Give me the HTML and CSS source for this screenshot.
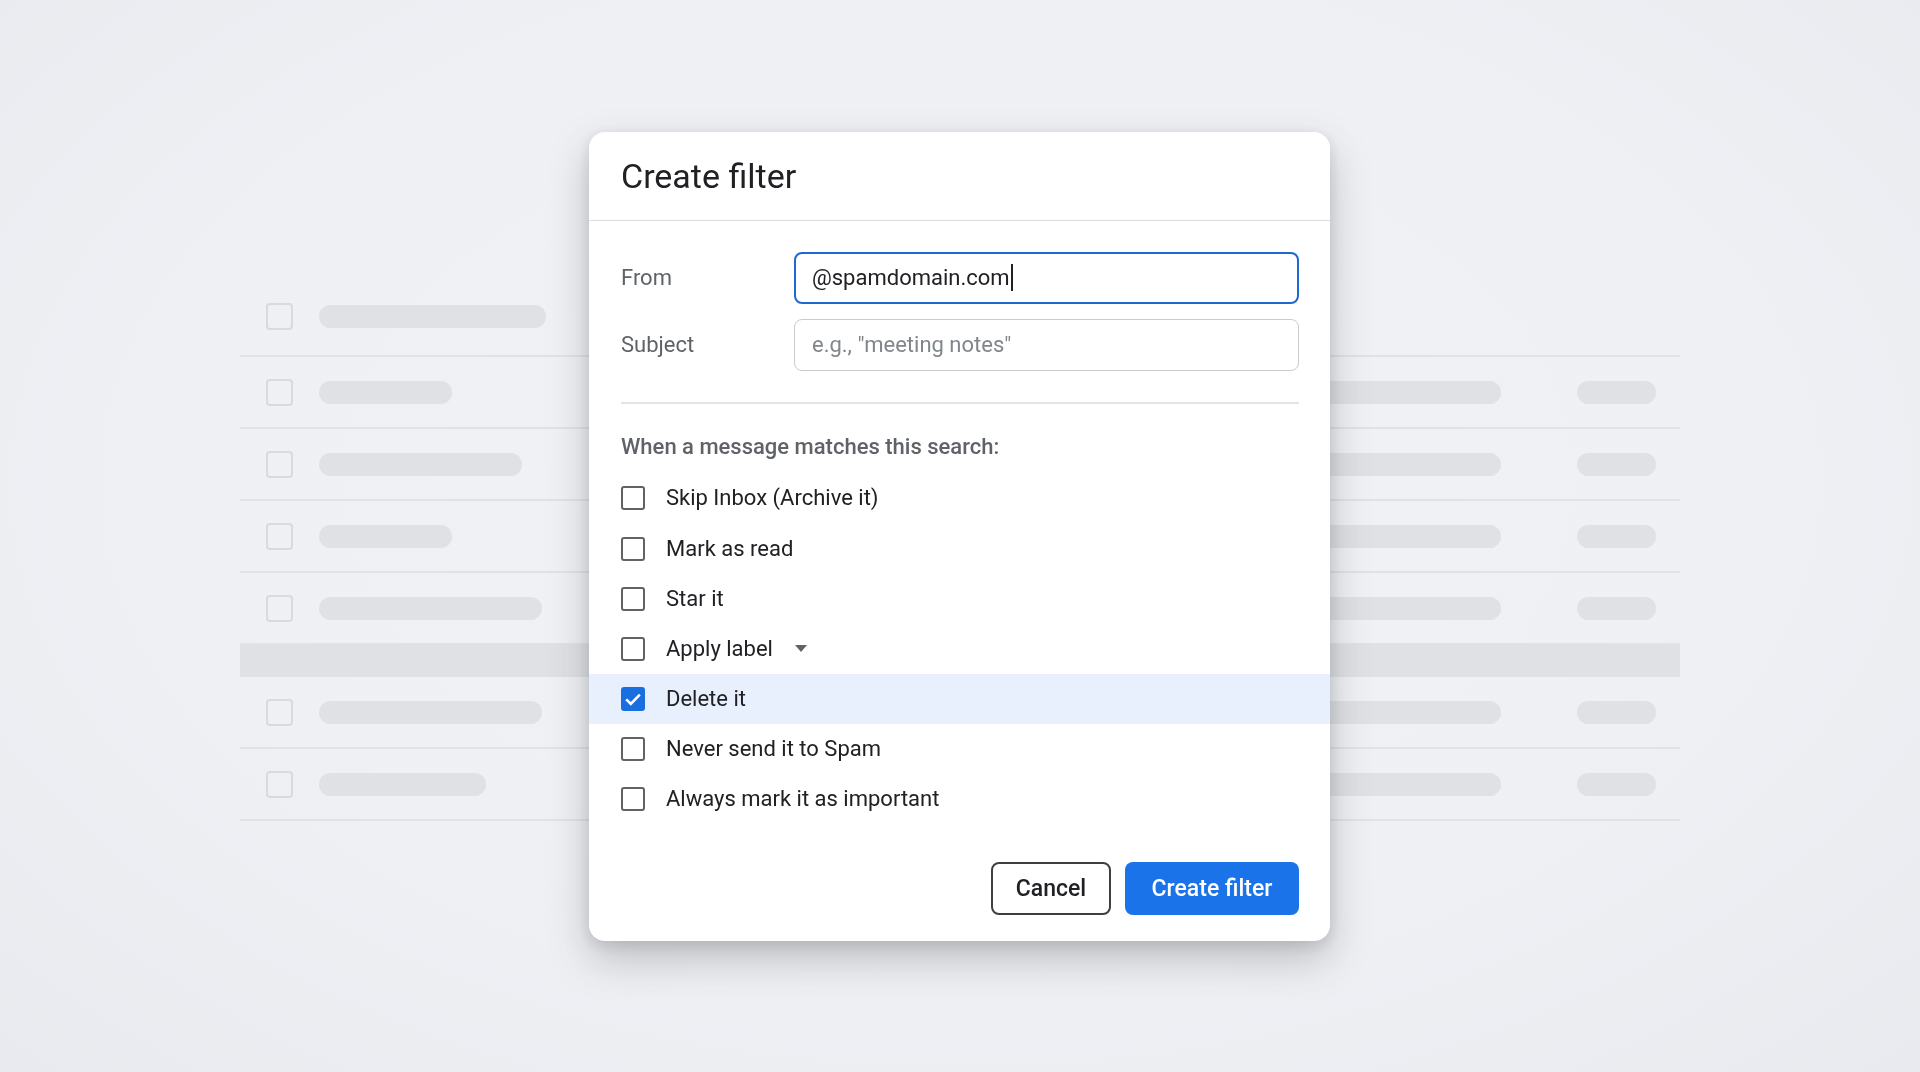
FILE: index.html
```html
<!DOCTYPE html>
<html lang="en">
    <head>
        <meta charset="UTF-8" />
        <meta name="viewport" content="width=device-width, initial-scale=1.0" />
        <title>Create filter</title>
        <link rel="stylesheet" href="styles.css">
    </head>
    <body>
        <div class="inbox">
            <div class="mail-row first">
                <span class="mail-check"></span>
                <span class="mail-bar" style="width: 227px"></span>
            </div>
            <div class="mail-row">
                <span class="mail-check"></span>
                <span class="mail-bar" style="width: 133px"></span>
                <span class="mail-bar subject"></span>
                <span class="mail-bar date"></span>
            </div>
            <div class="mail-row">
                <span class="mail-check"></span>
                <span class="mail-bar" style="width: 203px"></span>
                <span class="mail-bar subject"></span>
                <span class="mail-bar date"></span>
            </div>
            <div class="mail-row">
                <span class="mail-check"></span>
                <span class="mail-bar" style="width: 133px"></span>
                <span class="mail-bar subject"></span>
                <span class="mail-bar date"></span>
            </div>
            <div class="mail-row">
                <span class="mail-check"></span>
                <span class="mail-bar" style="width: 223px"></span>
                <span class="mail-bar subject"></span>
                <span class="mail-bar date"></span>
            </div>
            <div class="mail-band"></div>
            <div class="mail-row">
                <span class="mail-check"></span>
                <span class="mail-bar" style="width: 223px"></span>
                <span class="mail-bar subject"></span>
                <span class="mail-bar date"></span>
            </div>
            <div class="mail-row">
                <span class="mail-check"></span>
                <span class="mail-bar" style="width: 167px"></span>
                <span class="mail-bar subject"></span>
                <span class="mail-bar date"></span>
            </div>
        </div>

        <div class="scrim">
            <div class="dialog">
                <h1 class="dialog-title">Create filter</h1>
                <div class="dialog-body">
                    <div class="fields">
                        <label class="field-label">From</label>
                        <div class="field focused">
                            <span>@spamdomain.com</span><span class="caret"></span>
                        </div>
                        <label class="field-label">Subject</label>
                        <div class="field">
                            <span class="placeholder">e.g., "meeting notes"</span>
                        </div>
                    </div>
                    <div class="divider"></div>
                    <p class="actions-title">When a message matches this search:</p>
                </div>
                <ul class="actions">
                    <li class="action"><span class="checkbox"></span>Skip Inbox (Archive it)</li>
                    <li class="action"><span class="checkbox"></span>Mark as read</li>
                    <li class="action"><span class="checkbox"></span>Star it</li>
                    <li class="action">
                        <span class="checkbox"></span>Apply label
                        <svg class="dropdown" width="14" height="8" viewBox="0 0 14 8"><path d="M1 0h12L7 7z" fill="#5f6368"/></svg>
                    </li>
                    <li class="action selected">
                        <span class="checkbox checked">
                            <svg width="20" height="20" viewBox="0 0 20 20"><path d="M3.2 10.4l4.6 4.4 9-9.2" fill="none" stroke="#fff" stroke-width="2.6"/></svg>
                        </span>Delete it
                    </li>
                    <li class="action"><span class="checkbox"></span>Never send it to Spam</li>
                    <li class="action"><span class="checkbox"></span>Always mark it as important</li>
                </ul>
                <div class="dialog-footer">
                    <button class="btn outline">Cancel</button>
                    <button class="btn primary">Create filter</button>
                </div>
            </div>
        </div>
    </body>
</html>
```

FILE: styles.css
```css
* {
    margin: 0;
    padding: 0;
    box-sizing: border-box;
}

body {
    width: 1920px;
    height: 1072px;
    overflow: hidden;
    background: radial-gradient(ellipse at 50% 45%, #f1f2f6 0%, #eef0f4 60%, #e8eaef 100%);
    font-family: Roboto, "Liberation Sans", sans-serif;
    color: #202124;
}

/* inbox skeleton behind the dialog */
.inbox {
    width: 1440px;
    margin: 285px auto 0;
}

.mail-row {
    display: flex;
    align-items: center;
    height: 72px;
    padding: 0 24px 0 26px;
    border-bottom: 2px solid #e0e2e6;

    &.first {
        padding-bottom: 8px;
    }
}

.mail-band {
    height: 32px;
    background: #dfe1e5;
}

.mail-check {
    flex: none;
    width: 27px;
    height: 27px;
    border: 2px solid #d8dadf;
    border-radius: 4px;
}

.mail-bar {
    flex: none;
    height: 23px;
    margin-left: 26px;
    border-radius: 12px;
    background: #dfe1e5;

    &.subject {
        width: 350px;
        margin-left: auto;
    }
    &.date {
        width: 79px;
        margin-left: 76px;
    }
}

/* dialog */
.scrim {
    position: fixed;
    inset: 0;
    display: flex;
    align-items: center;
    justify-content: center;
}

.dialog {
    width: 741px;
    margin-right: 1px;
    background: #fff;
    border-radius: 16px;
    overflow: hidden;
    box-shadow: 0 18px 40px rgba(60, 64, 67, 0.28), 0 4px 14px rgba(60, 64, 67, 0.14);
}

.dialog-title {
    height: 89px;
    padding: 0 32px;
    line-height: 88px;
    font-size: 34px;
    font-weight: 400;
    color: #202124;
    border-bottom: 1px solid #dadce0;
}

.dialog-body {
    padding: 31px 31px 0 32px;
}

.fields {
    display: grid;
    grid-template-columns: 173px 1fr;
    row-gap: 15px;
    align-items: center;
}

.field-label {
    font-size: 22px;
    color: #5f6368;
}

.field {
    display: flex;
    align-items: center;
    height: 52px;
    padding: 0 17px;
    border: 1px solid #c9cbcf;
    border-radius: 8px;
    font-size: 22px;

    &.focused {
        padding: 0 16px;
        border: 2px solid #1f68d4;
    }
    .placeholder {
        color: #80868b;
    }
    .caret {
        width: 2px;
        height: 27px;
        margin-left: 1px;
        background: #202124;
    }
}

.divider {
    height: 2px;
    margin-top: 31px;
    background: #e2e4e7;
}

.actions-title {
    margin: 29px 0 12px;
    line-height: 28px;
    font-size: 22px;
    font-weight: 500;
    color: #5f6368;
}

.actions {
    list-style: none;
}

.action {
    display: flex;
    align-items: center;
    height: 50px;
    padding: 0 32px;
    font-size: 22px;
    color: #202124;

    &:first-child {
        height: 51px;
        padding-bottom: 1px;
    }
    &.selected {
        background: #e8f0fe;
    }
    .dropdown {
        margin-left: 21px;
    }
}

.checkbox {
    display: flex;
    align-items: center;
    justify-content: center;
    flex: none;
    width: 24px;
    height: 24px;
    margin-right: 21px;
    border: 2px solid #5f6368;
    border-radius: 3px;

    &.checked {
        background: #1a6fe0;
        border-color: #1a6fe0;
    }
}

.dialog-footer {
    display: flex;
    justify-content: flex-end;
    gap: 14px;
    padding: 38px 31px 26px;
}

.btn {
    height: 53px;
    border-radius: 8px;
    font-family: inherit;
    font-size: 23px;
    font-weight: 500;

    &.outline {
        width: 120px;
        border: 2px solid #3c4043;
        background: #fff;
        color: #202124;
    }
    &.primary {
        width: 174px;
        border: none;
        background: #1a73e8;
        color: #fff;
    }
}
```
